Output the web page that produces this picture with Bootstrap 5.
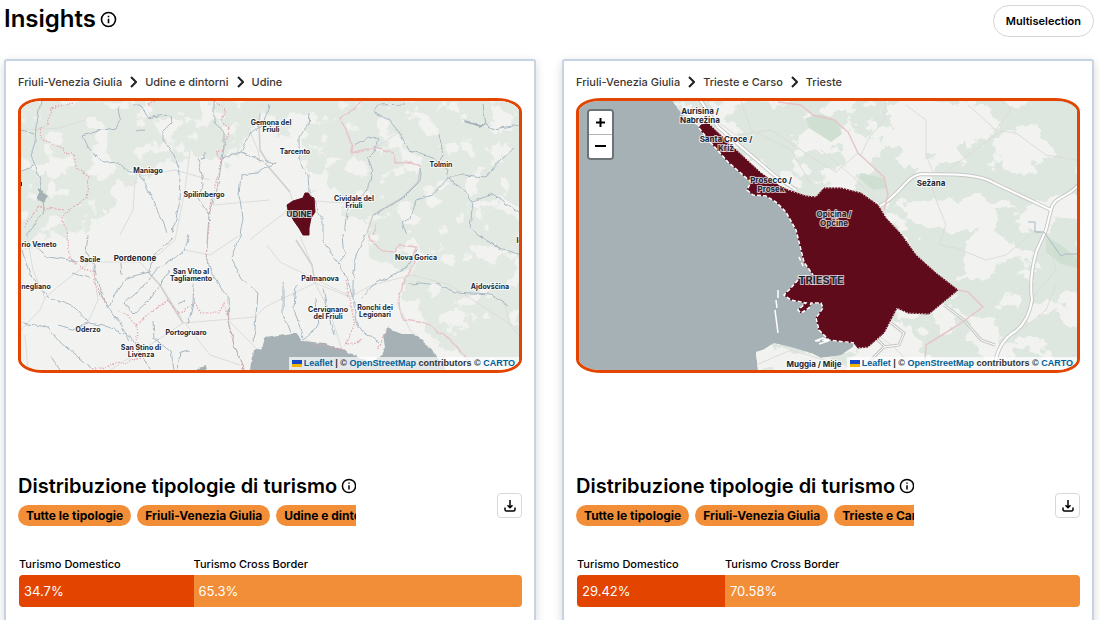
<!DOCTYPE html>
<html lang="it">
<head>
<meta charset="utf-8">
<meta name="viewport" content="width=device-width, initial-scale=1">
<title>Insights</title>
<link rel="stylesheet" href="https://cdn.jsdelivr.net/npm/bootstrap@5.3.0/dist/css/bootstrap.min.css">
<style>
  :root { --brand: #e34400; --brand-soft: #f18e37; --line: #c6d3e3; }
  body { font-family: Inter, "Open Sans", sans-serif; color: #000; background: #fff; }
  .page { padding: 5px 6px 0 4px; }
  .page-head { margin-bottom: 22px; }
  .page-title { font-size: 24px; line-height: 28px; font-weight: 600; }
  .section-title { font-size: 20px; line-height: 26px; font-weight: 600; white-space: nowrap; }
  .icon-btn { border: 0; background: none; padding: 0; display: inline-flex; color: #000; }
  .btn-multi { font-size: 11px; line-height: 16px; font-weight: 600; padding: 7px 12px; border: 1px solid #d6d6d6; color: #000; }
  .panels { display: grid; grid-template-columns: repeat(auto-fit, minmax(420px, 1fr)); gap: 26px; }
  .panel { border: 2px solid var(--line); border-radius: 3px; box-shadow: 0 3px 10px rgba(0,0,0,.16); padding: 13px 12px 60px; --bs-card-color: #000; }
  .crumbs { font-size: 11px; line-height: 16px; font-weight: 500; margin-bottom: 8px; gap: 8px; }
  .crumbs a { color: #3c3733; text-decoration: none; }
  .map-box { border: 3px solid var(--brand); border-radius: 5%; aspect-ratio: 504 / 275; margin-bottom: 100px; background: #f2f3f0; }
  .map-box > svg { width: 100%; height: 100%; display: block; }
  .zoom-ctl { top: 8px; left: 8px; border: 2px solid rgba(0,0,0,.35); border-radius: 4px; background: #fff; background-clip: padding-box; overflow: hidden; }
  .zoom-ctl button { width: 23px; height: 23px; border: 0; background: #fff; padding: 0; display: flex; align-items: center; justify-content: center; }
  .zoom-ctl button + button { border-top: 1px solid #b4b4b4; height: 24px; }
  .attribution { right: 0; bottom: 0; height: 13px; padding: 0 4px 0 3px; gap: 2px; background: rgba(255,255,255,.7); font: bold 9px/13px "Liberation Sans", sans-serif; white-space: nowrap; color: #333; }
  .attribution a { color: #00619a; text-decoration: none; }
  .tag-strip { width: 67%; overflow: hidden; }
  .tags { gap: 6px; margin-top: 6px; }
  .tag { flex: none; font-size: 12px; line-height: 21px; font-weight: 700; padding: 0 8px; border-radius: 11px; background: var(--brand-soft); white-space: nowrap; }
  .btn-save { width: 25px; height: 25px; padding: 0; border: 1px solid #d8d8d8; border-radius: 4px; margin-bottom: 8px; }
  .split { margin: 30px 0 0 1px; }
  .split-label { font-size: 11px; line-height: 16px; font-weight: 500; margin-bottom: 3px; white-space: nowrap; }
  .split-bar { height: 32px; padding-left: 5px; line-height: 32px; font-size: 13px; color: #fff; background: var(--brand-soft); border-radius: 0 4px 4px 0; }
  .split > :first-child .split-bar { background: var(--brand); border-radius: 4px 0 0 4px; }

  .land { fill: #f2f3f0; } .sea { fill: #a6b1b6; } .park { fill: #cfe0d3; }
  .river, .road, .trunk, .edge, .dots { fill: none; stroke-linejoin: round; }
  .river { stroke: #a9b8c2; } .road { stroke: #dcdcda; }
  .trunk-case { fill: none; stroke: #c6c8c6; stroke-width: 4; stroke-linejoin: round; } .trunk { stroke: #fff; stroke-width: 2; }
  .edge { stroke: #e6c5c9; stroke-width: 1.5; } .dots { stroke: #e2a3ad; stroke-width: 1.2; stroke-dasharray: 1.5 1.5; }
  .area { fill: #5f0b1c; stroke: #5f0b1c; }
  .area-coast { fill: none; stroke: #fff; stroke-width: 1.5; stroke-dasharray: 4 2; }
  .area-coast.fine { stroke-width: 1; stroke-dasharray: 1 2; }
  .place { font-family: Inter, sans-serif; font-weight: 700; font-size: 7px; fill: #1c2733; text-anchor: middle; paint-order: stroke; stroke: rgba(255,255,255,.7); stroke-width: 2px; }
  .place.medium { font-size: 8px; }
  .place .major { font-size: 11px; }
  .place .city { font-size: 8px; }
</style>
</head>
<body>
<main class="page vh-100 overflow-hidden">
  <header class="page-head d-flex justify-content-between align-items-start">
    <div class="d-flex align-items-center gap-1">
      <h1 class="page-title mb-0">Insights</h1>
      <button class="icon-btn" type="button" aria-label="Info"><svg width="17" height="17" viewBox="0 0 16 16" fill="none" stroke="#000" stroke-width="1.5"><circle cx="8" cy="8" r="6.6"/><path d="M8 4.4v1.4M8 7.2v4.4"/></svg></button>
    </div>
    <button type="button" class="btn btn-multi rounded-pill">Multiselection</button>
  </header>

  <div class="panels">
    <section class="card panel">
      <nav class="crumbs d-flex align-items-center" aria-label="Area">
        <a href="#">Friuli-Venezia Giulia</a>
        <svg width="7" height="12" viewBox="0 0 7 12" fill="none" stroke="#222" stroke-width="2"><path d="M1 1l5 5-5 5"/></svg>
        <a href="#">Udine e dintorni</a>
        <svg width="7" height="12" viewBox="0 0 7 12" fill="none" stroke="#222" stroke-width="2"><path d="M1 1l5 5-5 5"/></svg>
        <a href="#">Udine</a>
      </nav>
      <div class="map-box position-relative overflow-hidden">
        <svg viewBox="21 101 498 269" preserveAspectRatio="xMidYMid slice" role="img" aria-label="Udine">
          <defs>
            <filter id="woods" x="0" y="0" width="100%" height="100%">
              <feTurbulence type="fractalNoise" baseFrequency=".045" numOctaves="5" seed="8" result="n"/>
              <feColorMatrix in="n" type="matrix" values="0 0 0 0 0  0 0 0 0 0  0 0 0 0 0  22 0 0 0 -8.2" result="m"/>
              <feDisplacementMap in="SourceGraphic" in2="n" scale="34" xChannelSelector="R" yChannelSelector="G" result="d"/>
              <feComposite in="d" in2="m" operator="in"/>
            </filter>
            <filter id="wiggle" x="-5%" y="-5%" width="110%" height="110%">
              <feTurbulence type="fractalNoise" baseFrequency=".12" numOctaves="2" seed="3"/>
              <feDisplacementMap in="SourceGraphic" scale="5" xChannelSelector="R" yChannelSelector="G"/>
            </filter>
          </defs>
          <rect class="land" x="0" y="80" width="560" height="310"/>
          <path fill="#e2e9e3" filter="url(#woods)" d="M0 80H560V390H500L460 355 425 325 410 290 385 262 370 235 345 200 310 170 290 135 262 120 240 150 225 165 185 158 160 168 135 180 110 205 82 236 0 245Z"/>
          <g class="road">
            <path d="M23 130L60 128 85 120M135 180L133 210 120 235M141 176L175 170 210 180M213 205L270 200M265 163L280 180 290 192 293 203M190 150L185 190 175 240 150 262M300 236L312 265 315 283 350 297 372 285 412 275 450 285 519 330M21 330L40 310 45 298 60 285 90 262 140 262 160 285 180 315 183 323 255 317 265 307 315 283M27 235L33 270 45 298M28 370L25 335M110 370L150 345 183 323M315 283L330 312 345 360M250 132L258 150 260 163M300 200L345 203M267 245L280 262 352 297M240 235L210 255 185 250M93 268L98 300 88 322M315 190L262 230 250 240M402 130L390 138 372 150M505 305L510 325 519 335M397 302L410 330 432 350 440 370M185 323L210 355 240 365M228 320L260 352"/>
            <path stroke-width="1.5" stroke="#cfcfce" d="M148 272L160 285 176 312 183 323M420 168L418 182 402 198 373 215 367 233M265 163L278 178 290 192M296 240L312 265 315 283M260 113L259 123 260 150 268 163"/>
          </g>
          <g filter="url(#wiggle)">
            <path class="river" d="M41 101L36 127 35 142 31 155 37 170 41 185 44 210 34 225 26 235M22 130L34 134M22 170L34 165M119 108L121 118 116 128 101 130 83 136 88 147 96 157 106 163 119 162 128 172 139 172 154 202 167 233M132 105L141 105 148 118 158 116 171 115 172 123 163 132 163 142 174 155 180 172 179 205 173 232M204 152L204 158 198 160 202 175 203 185 198 198 209 215M214 101L214 122 224 133 224 148 222 158 241 152 251 132 264 123M222 158L217 190 209 215 206 258 214 278 228 298 229 322 234 345 244 370M241 152L255 158 275 163 258 173 241 175 239 195 243 218 240 235 231 258 241 278 258 293 256 315 254 342M136 132L145 130M88 235L86 252 94 265 99 288 108 308 121 323 126 335 130 340M34 245L48 257 91 263M22 250L31 275 48 297 74 307 89 323 108 327 131 337 150 370M189 235L184 252 158 268 144 285 124 303 133 315 151 298 170 270 M173 238L154 255 149 272 126 278 114 295 109 308M120 255L122 275M22 323L48 327 61 343 91 368M58 325L70 330 88 323M72 273L90 278M194 282L193 303 188 325M153 322L154 338 171 352 174 370M190 350L180 352 178 370M185 300L178 305M50 355L60 370M309 113L308 125 299 138 299 158 308 175 309 192 316 205 323 218 323 242 336 260 346 277 353 297 356 322 363 332 379 342M404 104L379 105 373 112 389 120 399 132 409 150 433 158 448 170 446 178 463 188 473 202 493 193 519 213M439 133L443 155 439 162M514 148L499 162 486 177 463 175 448 178 433 195 416 200 411 218 401 223 406 235M483 105L486 125 463 122M486 125L493 129 519 125M354 145L369 137 378 140 374 152 368 158 372 168 369 188 348 208 344 232M421 168L419 182 403 198 374 215M473 202L470 228 479 235 499 248 519 255M366 235L356 255 353 282 353 297M343 235L345 255 337 265M418 248L406 268 373 285 361 298M403 285L420 283 439 285 455 292 473 293 490 294 508 305M296 285L294 308 303 338M323 288L329 318 334 335M283 282L283 315 291 335M316 298L318 328 303 340M270 105L262 125M480 235L500 250"/>
            <path class="sea" d="M249 376L253 350 262 348 265 338 285 335 297 333 302 341 325 343 345 350 352 355 370 362 366 376ZM370 364L381 355 385 346 383 336 388 325 394 331 402 334 414 334 428 345 442 362 449 376H366ZM38 188L48 195 43 204 38 199ZM198 368L206 366 208 373H198ZM463 121L485 125 480 127Z"/>
            <path class="edge" d="M361 101L355 108 340 118 348 135 352 147 350 153 362 150 374 148 393 153 396 163 413 162 422 167M377 222L373 235M368 235L383 252 393 253 399 245 416 247 413 265 403 285 398 302 403 320 426 323 453 342 468 360"/>
            <path class="dots" d="M74 103L51 108 48 125 39 128 43 140 63 147 64 154 74 155 76 167 89 177 86 198 64 213 63 222 68 235 69 258 81 267 94 272 96 288 108 305M118 310L128 315 136 325 138 348M136 325L161 305 168 300 178 313 194 303 201 313 219 313 224 303 228 315 234 345 244 370M141 358L121 363 92 370M25 228L38 207 64 210M214 102L226 110 221 122 229 128 223 150 216 152 221 160 211 205 208 235 206 260M148 104L155 101M345 280L350 300 355 325 345 345 363 340M306 341L345 350M378 350L388 325"/>
          </g>
          <path class="area" d="M287 205L293 201 303 198 305 193 308 193 311 197 314 198 315 212 311 218 309 228 309 235 303 235 299 228 294 221 288 210Z"/>
          <path fill="#222" d="M21 182h1v4h-1z"/>
          <g class="place">
            <text x="271" y="125">Gemona del</text><text x="271" y="132">Friuli</text><text x="295" y="154">Tarcento</text><text x="441" y="167">Tolmin</text><text x="148" y="173">Maniago</text><text x="204" y="197">Spilimbergo</text><text x="354" y="201">Cividale del</text><text x="354" y="208">Friuli</text>
            <text class="city" x="299" y="217">UDINE</text><text x="39" y="247">rio Veneto</text><text x="90" y="262">Sacile</text><text class="city" x="135" y="261">Pordenone</text><text x="191" y="274">San Vito al</text><text x="191" y="281">Tagliamento</text><text x="416" y="260">Nova Gorica</text><text x="36" y="289">negliano</text><text x="320" y="281">Palmanova</text><text x="490" y="289">Ajdovščina</text><text x="328" y="312">Cervignano</text><text x="328" y="319">del Friuli</text><text x="375" y="310">Ronchi dei</text><text x="375" y="317">Legionari</text><text x="88" y="332">Oderzo</text><text x="186" y="335">Portogruaro</text><text x="141" y="350">San Stino di</text><text x="141" y="357">Livenza</text><text x="525" y="243">Idrija</text>
          </g>
        </svg>
        <div class="attribution position-absolute d-flex align-items-center"><svg width="10" height="7" viewBox="0 0 10 7"><path fill="#1548c4" d="M0 0h10v4H0z"/><path fill="#f5b301" d="M0 4h10v3H0z"/></svg><span><a href="#">Leaflet</a> | © <a href="#">OpenStreetMap</a> contributors © <a href="#">CARTO</a></span></div>
      </div>
      <div class="d-flex justify-content-between align-items-end">
        <div class="tag-strip">
          <div class="d-flex align-items-center gap-1"><h2 class="section-title mb-0">Distribuzione tipologie di turismo</h2>
          <button class="icon-btn" type="button" aria-label="Info"><svg width="16" height="16" viewBox="0 0 16 16" fill="none" stroke="#000" stroke-width="1.5"><circle cx="8" cy="8" r="6.6"/><path d="M8 4.4v1.4M8 7.2v4.4"/></svg></button></div>
          <div class="d-flex tags"><span class="tag">Tutte le tipologie</span><span class="tag">Friuli-Venezia Giulia</span><span class="tag">Udine e dintorni</span></div>
        </div>
        <button type="button" class="btn btn-save d-flex align-items-center justify-content-center" aria-label="Download"><svg width="12" height="12" viewBox="0 0 12 12" fill="none" stroke="#000" stroke-width="1.5"><path d="M6 0v7.500M3.500 5.300l2.500 2.500 2.500-2.500M1 7.500v2q0 1.500 1.500 1.500h7q1.500 0 1.500-1.500v-2"/></svg></button>
      </div>
      <div class="split d-flex">
        <div style="width:34.7%"><div class="split-label">Turismo Domestico</div><div class="split-bar">34.7%</div></div>
        <div style="width:65.3%"><div class="split-label">Turismo Cross Border</div><div class="split-bar">65.3%</div></div>
      </div>
    </section>

    <section class="card panel">
      <nav class="crumbs d-flex align-items-center" aria-label="Area">
        <a href="#">Friuli-Venezia Giulia</a>
        <svg width="7" height="12" viewBox="0 0 7 12" fill="none" stroke="#222" stroke-width="2"><path d="M1 1l5 5-5 5"/></svg>
        <a href="#">Trieste e Carso</a>
        <svg width="7" height="12" viewBox="0 0 7 12" fill="none" stroke="#222" stroke-width="2"><path d="M1 1l5 5-5 5"/></svg>
        <a href="#">Trieste</a>
      </nav>
      <div class="map-box position-relative overflow-hidden">
        <svg viewBox="578 101 498 269" preserveAspectRatio="xMidYMid slice" role="img" aria-label="Trieste">
          <defs>
            <filter id="clearings" x="0" y="0" width="100%" height="100%">
              <feTurbulence type="fractalNoise" baseFrequency=".024 .03" numOctaves="6" seed="21" result="n"/>
              <feColorMatrix in="n" type="matrix" values="0 0 0 0 0  0 0 0 0 0  0 0 0 0 0  45 0 0 0 -24" result="m"/>
              <feComposite in="SourceGraphic" in2="m" operator="in"/>
            </filter>
            <filter id="ragged" x="-5%" y="-5%" width="110%" height="110%">
              <feTurbulence type="fractalNoise" baseFrequency=".09" numOctaves="4" seed="5"/>
              <feDisplacementMap in="SourceGraphic" scale="24" xChannelSelector="R" yChannelSelector="G"/>
            </filter>
            <clipPath id="mainland"><path d="M667 95L683 117 700 128 710 143 727 162 750 182 765 196 775 202 785 212 795 230 803 262 812 275 825 300 828 340 853 343 852 347 840 355 820 358 810 353 790 347 773 343 762 350 755 352 758 380H1090V95Z"/></clipPath>
          </defs>
          <rect class="sea" x="560" y="80" width="540" height="310"/>
          <g clip-path="url(#mainland)">
            <rect fill="#dde6df" x="600" y="80" width="500" height="310"/>
            <rect class="land" x="600" y="80" width="500" height="310" filter="url(#clearings)"/>
            <path class="land" filter="url(#ragged)" d="M893 101L880 113 893 122 870 128 873 142 895 148 900 165 930 172 925 150 950 150 985 140 1000 122 985 101ZM870 325L905 322 925 350 935 370H840L858 352ZM755 352L790 347 830 358 840 370H755ZM667 101L690 105 740 155 790 188 770 187 700 128Z"/>
            <path class="park" d="M805 118L820 114 836 120 841 134 830 142 808 128ZM860 173L882 178 885 188 872 190 858 178ZM1045 237L1060 245 1076 258V268L1060 264 1045 252Z"/>
            <g class="road"><path d="M885 101L883 120 868 138 860 155M905 105L925 120 925 155 932 172M940 175L1000 131 1015 133 1045 155 1076 160M967 105L995 130 1010 110 1000 101M1045 235L1055 270 1030 300M930 185L935 200 945 225 938 245 955 248 985 260 1005 255 1035 230M700 110L735 135 770 130 815 160 835 172M740 101L750 130 790 150 810 185M835 172L857 153M820 150L850 175 880 205M755 365L790 350 830 362M870 330L893 347 915 370M995 355L1015 370M1020 330L1045 310 1055 285"/></g>
            <path class="trunk-case" d="M698 98L717 127 773 175 795 190M877 207C900 196 905 174 922 174C942 175 975 172 993 183L1050 210C1052 196 1068 198 1078 184M1050 210L1045 230 1036 250Q1028 275 1031 300Q1028 320 1015 331Q995 342 993 372"/>
            <path class="trunk" d="M698 98L717 127 773 175 795 190M877 207C900 196 905 174 922 174C942 175 975 172 993 183L1050 210C1052 196 1068 198 1078 184M1050 210L1045 230 1036 250Q1028 275 1031 300Q1028 320 1015 331Q995 342 993 372"/>
            <path fill="none" stroke="#c6c8c6" stroke-width="3" d="M943 305L963 320 980 340 994 345M890 323L903 333 898 345 883 347 865 365M875 338L884 347"/>
            <path fill="none" stroke="#fff" d="M943 305L963 320 980 340 994 345M890 323L903 333 898 345 883 347 865 365M875 338L884 347"/>
            <path class="river" d="M1027 222H1034V232H1040M1035 232H1043L1060 256 1064 254H1076"/>
            <path class="edge" d="M777 102L800 105 812 115 820 117 833 120 847 132 857 153 883 177 887 195 883 210M957 290L967 292 982 307 957 325 925 345 924 362"/>
          </g>
          <path class="area" d="M698 128L700 125 707 123 733 148 760 173 777 185 787 190 805 196 815 197 823 188 840 188 860 193 877 205 885 218 900 234 915 255 935 273 957 290 928 314 907 313 896 308 883 333 867 347 857 348 853 343 828 340 818 330 815 318 822 308 820 303 810 303 808 308 800 313 797 310 805 303 790 300 783 295 788 290 797 280 812 275 803 262 795 230 785 212 775 202 765 196 752 195 746 190 750 182 727 162 710 143Z"/>
          <path class="area-coast" d="M698 128L710 143 727 162 750 182 746 190 752 195 765 196 775 202 785 212 795 230 803 262 812 275M797 280L788 290 783 295 790 300 805 303 797 310 800 313 808 308 810 303 820 303 822 308 815 318 818 330 828 340 853 343M798 257L803 268M815 341L828 340"/>
          <path class="area-coast fine" d="M707 123L733 148 760 173 787 190 805 196 815 197 823 188 840 188 860 193 877 205 885 218 900 234 915 255 935 273 957 290 928 314 907 313 896 308 883 333 867 347 857 348"/>
          <path fill="none" stroke="#fff" stroke-width="1.5" d="M777 290v8M775 300l1 8M774 310l3 23M814 341l8-3 6 3M818 344l9-3"/>
          <g class="place medium">
            <text x="699" y="114">Aurisina /</text><text x="699" y="123">Nabrežina</text><text x="725" y="142">Santa Croce /</text><text x="725" y="151">Križ</text><text x="770" y="183">Prosecco /</text><text x="770" y="192">Prosek</text><text x="833" y="217">Opicina /</text><text x="833" y="226">Opčine</text><text x="930" y="186">Sežana</text><text class="major" x="820" y="284">TRIESTE</text><text x="813" y="367">Muggia / Milje</text>
          </g>
        </svg>
        <div class="zoom-ctl position-absolute">
          <button type="button" aria-label="Zoom in"><svg width="11" height="11" viewBox="0 0 11 11" stroke="#000" stroke-width="2"><path d="M5.500 1v9M1 5.500h9"/></svg></button>
          <button type="button" aria-label="Zoom out"><svg width="11" height="11" viewBox="0 0 11 11" stroke="#000" stroke-width="2"><path d="M0 5h11"/></svg></button>
        </div>
        <div class="attribution position-absolute d-flex align-items-center"><svg width="10" height="7" viewBox="0 0 10 7"><path fill="#1548c4" d="M0 0h10v4H0z"/><path fill="#f5b301" d="M0 4h10v3H0z"/></svg><span><a href="#">Leaflet</a> | © <a href="#">OpenStreetMap</a> contributors © <a href="#">CARTO</a></span></div>
      </div>
      <div class="d-flex justify-content-between align-items-end">
        <div class="tag-strip">
          <div class="d-flex align-items-center gap-1"><h2 class="section-title mb-0">Distribuzione tipologie di turismo</h2>
          <button class="icon-btn" type="button" aria-label="Info"><svg width="16" height="16" viewBox="0 0 16 16" fill="none" stroke="#000" stroke-width="1.5"><circle cx="8" cy="8" r="6.6"/><path d="M8 4.4v1.4M8 7.2v4.4"/></svg></button></div>
          <div class="d-flex tags"><span class="tag">Tutte le tipologie</span><span class="tag">Friuli-Venezia Giulia</span><span class="tag">Trieste e Carso</span></div>
        </div>
        <button type="button" class="btn btn-save d-flex align-items-center justify-content-center" aria-label="Download"><svg width="12" height="12" viewBox="0 0 12 12" fill="none" stroke="#000" stroke-width="1.5"><path d="M6 0v7.500M3.500 5.300l2.500 2.500 2.500-2.500M1 7.500v2q0 1.500 1.500 1.500h7q1.500 0 1.500-1.500v-2"/></svg></button>
      </div>
      <div class="split d-flex">
        <div style="width:29.42%"><div class="split-label">Turismo Domestico</div><div class="split-bar">29.42%</div></div>
        <div style="width:70.58%"><div class="split-label">Turismo Cross Border</div><div class="split-bar">70.58%</div></div>
      </div>
    </section>
  </div>
</main>
<script src="https://cdn.jsdelivr.net/npm/bootstrap@5.3.0/dist/js/bootstrap.bundle.min.js"></script>
</body>
</html>
